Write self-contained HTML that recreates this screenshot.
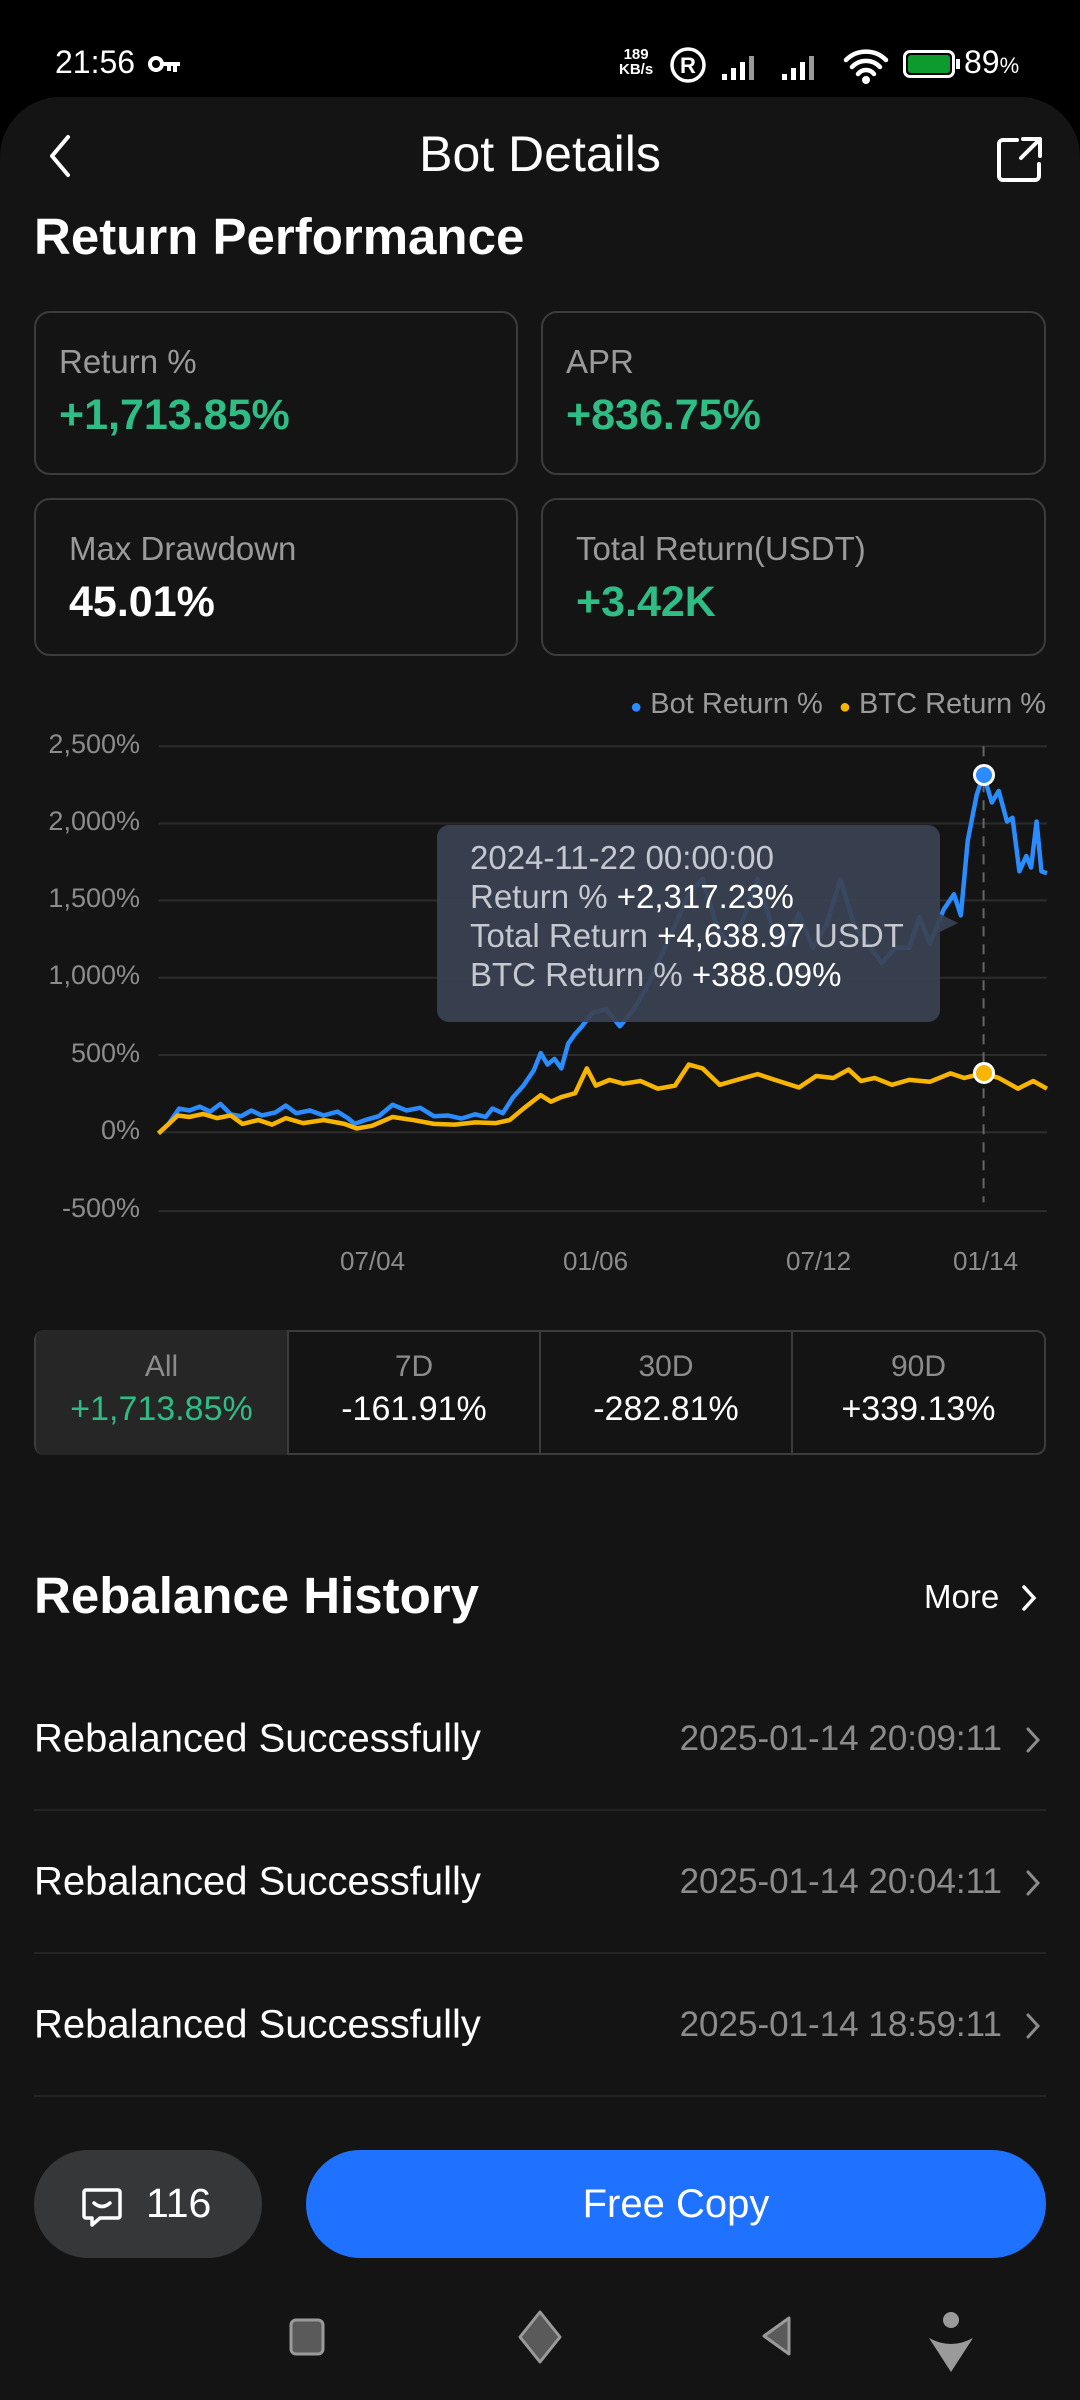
<!DOCTYPE html>
<html><head><meta charset="utf-8"><style>
*{margin:0;padding:0;box-sizing:border-box}
body{width:1080px;height:2400px;background:#000;position:relative;overflow:hidden;font-family:"Liberation Sans",sans-serif;color:#fff}
.a{position:absolute;white-space:nowrap}
.panel{position:absolute;left:0;top:97px;width:1080px;height:2303px;background:#141414;border-radius:60px 60px 0 0}
.card{position:absolute;border:2px solid #3c3c3c;border-radius:16px}
.lbl{font-size:33px;color:#9a9a9a}
.val{font-size:43px;font-weight:bold}
.g{color:#2ebd85}
.yl{position:absolute;right:940px;font-size:27px;color:#8c8c8c;text-align:right}
.xl{position:absolute;font-size:26px;color:#8c8c8c;top:1246px}
.tab{position:absolute;top:1330px;height:125px;text-align:center}
.tab .t{font-size:30px;color:#8c8c8c;margin-top:20px}
.tab .v{font-size:34px;color:#fff;margin-top:6px}
.row{position:absolute;left:34px;width:1012px;height:143px;border-bottom:2px solid #242424}
.row .l{position:absolute;left:0;top:50%;transform:translateY(-50%);font-size:40px}
.row .r{position:absolute;right:44px;top:50%;transform:translateY(-50%);font-size:35px;color:#8c8c8c}
.row svg{position:absolute;right:4px;top:58px}
.dot{position:absolute;width:22px;height:22px;border-radius:50%;border:3px solid #fff}
</style></head><body>
<div class="a" style="left:55px;top:44px;font-size:32px">21:56</div>
<svg class="a" style="left:148px;top:54px" width="34" height="20" viewBox="0 0 34 20"><circle cx="8" cy="10" r="6" fill="none" stroke="#fff" stroke-width="4"/><path d="M14 8h18v4h-3v6h-4v-6h-2v5h-4v-5h-5z" fill="#fff"/></svg>
<div class="a" style="left:619px;top:47px;font-size:15px;font-weight:bold;line-height:15px;text-align:center">189<br>KB/s</div>
<svg class="a" style="left:668px;top:45px" width="40" height="40"><circle cx="20" cy="20" r="16" fill="none" stroke="#fff" stroke-width="3.5"/><text x="20" y="28" font-size="22" font-weight="bold" fill="#fff" text-anchor="middle" font-family="Liberation Sans">R</text></svg>
<svg class="a" style="left:722px;top:48px" width="110" height="34"><g fill="#fff"><rect x="0" y="26" width="5" height="6"/><rect x="9" y="20" width="5" height="12"/><rect x="18" y="14" width="5" height="18"/><rect x="27" y="8" width="5" height="24" opacity=".6"/><rect x="60" y="26" width="5" height="6"/><rect x="69" y="20" width="5" height="12"/><rect x="78" y="14" width="5" height="18"/><rect x="87" y="8" width="5" height="24" opacity=".6"/></g></svg>
<svg class="a" style="left:842px;top:46px" width="48" height="40" viewBox="0 0 48 40"><path d="M4 14a28 28 0 0 1 40 0M10 21a19 19 0 0 1 28 0M16 28a10 10 0 0 1 16 0" fill="none" stroke="#fff" stroke-width="4.5" stroke-linecap="round"/><circle cx="24" cy="34" r="4" fill="#fff"/></svg>
<div class="a" style="left:903px;top:50px;width:52px;height:28px;border:3px solid #fff;border-radius:7px;padding:2px"><div style="width:100%;height:100%;background:#0c9b2c;border-radius:3px"></div></div>
<div class="a" style="left:956px;top:59px;width:4px;height:10px;background:#fff"></div>
<div class="a" style="left:964px;top:44px;font-size:32px">89<span style="font-size:22px">%</span></div>

<div class="panel"></div>
<svg class="a" style="left:46px;top:133px" width="26" height="46"><path d="M22 4L6 23l16 19" fill="none" stroke="#fff" stroke-width="4" stroke-linecap="round" stroke-linejoin="round"/></svg>
<div class="a" style="left:0;width:1080px;text-align:center;top:125px;font-size:50px">Bot Details</div>
<svg class="a" style="left:995px;top:134px" width="50" height="50"><path d="M22 6H8a4 4 0 0 0-4 4v32a4 4 0 0 0 4 4h32a4 4 0 0 0 4-4V30M28 5h17v17M45 5L26 24" fill="none" stroke="#fff" stroke-width="4" stroke-linecap="round" stroke-linejoin="round"/></svg>

<div class="a" style="left:34px;top:207px;font-size:51px;font-weight:bold">Return Performance</div>
<div class="card" style="left:34px;top:311px;width:484px;height:164px"><div class="a lbl" style="left:23px;top:30px">Return %</div><div class="a val g" style="left:23px;top:78px">+1,713.85%</div></div>
<div class="card" style="left:541px;top:311px;width:505px;height:164px"><div class="a lbl" style="left:23px;top:30px">APR</div><div class="a val g" style="left:23px;top:78px">+836.75%</div></div>
<div class="card" style="left:34px;top:498px;width:484px;height:158px"><div class="a lbl" style="left:33px;top:30px">Max Drawdown</div><div class="a val" style="left:33px;top:78px">45.01%</div></div>
<div class="card" style="left:541px;top:498px;width:505px;height:158px"><div class="a lbl" style="left:33px;top:30px">Total Return(USDT)</div><div class="a val g" style="left:33px;top:78px">+3.42K</div></div>

<div class="a" style="right:34px;top:688px;font-size:29px;color:#9a9a9a"><span style="color:#2a8cff;font-size:20px">●</span> Bot Return % &nbsp;<span style="color:#f7b500;font-size:20px">●</span> BTC Return %</div>
<div class="yl" style="top:729px">2,500%</div>
<div class="yl" style="top:806px">2,000%</div>
<div class="yl" style="top:883px">1,500%</div>
<div class="yl" style="top:960px">1,000%</div>
<div class="yl" style="top:1038px">500%</div>
<div class="yl" style="top:1115px">0%</div>
<div class="yl" style="top:1193px">-500%</div>
<div class="xl" style="left:340px">07/04</div>
<div class="xl" style="left:563px">01/06</div>
<div class="xl" style="left:786px">07/12</div>
<div class="xl" style="left:953px">01/14</div>

<svg class="a" style="left:0;top:680px" width="1080" height="600" viewBox="0 0 1568 1568" preserveAspectRatio="none">
<g stroke="#2c2c2c" stroke-width="2"><line x1="230" y1="173" x2="1520" y2="173" vector-effect="non-scaling-stroke"/><line x1="230" y1="375" x2="1520" y2="375" vector-effect="non-scaling-stroke"/><line x1="230" y1="576" x2="1520" y2="576" vector-effect="non-scaling-stroke"/><line x1="230" y1="778" x2="1520" y2="778" vector-effect="non-scaling-stroke"/><line x1="230" y1="980" x2="1520" y2="980" vector-effect="non-scaling-stroke"/><line x1="230" y1="1182" x2="1520" y2="1182" vector-effect="non-scaling-stroke"/><line x1="230" y1="1388" x2="1520" y2="1388" vector-effect="non-scaling-stroke"/></g>
<line x1="1428" y1="173" x2="1428" y2="1365" stroke="#666" stroke-width="2" stroke-dasharray="10 8" vector-effect="non-scaling-stroke"/>
<polyline vector-effect="non-scaling-stroke" fill="none" stroke="#2a8cff" stroke-width="4.5" stroke-linejoin="round" points="230,1185 245,1160 260,1120 275,1125 290,1115 305,1128 320,1108 335,1135 350,1140 365,1125 380,1138 400,1130 415,1112 430,1132 450,1125 470,1138 490,1128 505,1145 515,1160 530,1150 550,1140 570,1110 590,1125 610,1118 630,1140 650,1138 670,1146 690,1135 705,1142 715,1120 730,1132 745,1090 760,1060 775,1020 785,975 795,1005 805,990 815,1015 825,950 835,925 845,905 860,870 880,860 900,905 920,860 940,800 960,720 980,640 1000,560 1020,520 1040,640 1060,700 1080,620 1100,520 1120,640 1140,690 1160,610 1180,700 1200,640 1220,520 1240,640 1260,690 1280,740 1300,700 1320,700 1335,620 1350,690 1370,600 1385,560 1395,615 1405,420 1418,300 1428,248 1440,320 1450,290 1462,370 1470,360 1480,500 1490,460 1497,490 1505,370 1512,500 1520,505"/>
<polyline vector-effect="non-scaling-stroke" fill="none" stroke="#f7b500" stroke-width="4.5" stroke-linejoin="round" points="230,1185 245,1160 258,1138 275,1142 295,1134 315,1145 335,1138 352,1160 375,1150 395,1162 415,1145 440,1158 470,1150 500,1160 518,1172 540,1165 570,1142 600,1150 630,1160 660,1162 690,1156 720,1158 740,1150 760,1120 785,1085 800,1102 815,1090 835,1080 852,1015 865,1060 885,1045 905,1055 930,1048 955,1068 980,1060 1000,1005 1020,1015 1045,1058 1070,1045 1100,1030 1125,1045 1160,1065 1185,1035 1210,1040 1232,1018 1250,1048 1270,1040 1295,1058 1320,1045 1350,1050 1380,1028 1400,1040 1428,1028 1450,1040 1478,1068 1500,1048 1520,1068"/>
<path d="M1363 610l28 25-28 25z" fill="#3b4252" fill-opacity=".92"/>
</svg>
<div class="a" style="left:437px;top:825px;width:503px;height:197px;border-radius:12px;background:rgba(59,66,82,.92)"></div>
<div class="dot" style="left:973px;top:764px;background:#2a8cff"></div>
<div class="dot" style="left:973px;top:1062px;background:#f7b500"></div>
<div class="a" style="left:470px;top:838px;font-size:33px;line-height:39px;color:#c5c8cf">2024-11-22 00:00:00<br>Return % <span style="color:#fff">+2,317.23%</span><br>Total Return <span style="color:#fff">+4,638.97</span> USDT<br>BTC Return % <span style="color:#fff">+388.09%</span></div>

<div class="a" style="left:34px;top:1330px;width:1012px;height:125px;border:2px solid #3c3c3c;border-radius:10px"></div>
<div class="tab" style="left:36px;width:251px;background:#262626;border-radius:8px 0 0 8px"><div class="t">All</div><div class="v g" style="color:#2ebd85">+1,713.85%</div></div>
<div class="a" style="left:287px;top:1332px;width:2px;height:121px;background:#3c3c3c"></div>
<div class="tab" style="left:289px;width:250px"><div class="t">7D</div><div class="v">-161.91%</div></div>
<div class="a" style="left:539px;top:1332px;width:2px;height:121px;background:#3c3c3c"></div>
<div class="tab" style="left:541px;width:250px"><div class="t">30D</div><div class="v">-282.81%</div></div>
<div class="a" style="left:791px;top:1332px;width:2px;height:121px;background:#3c3c3c"></div>
<div class="tab" style="left:793px;width:251px"><div class="t">90D</div><div class="v">+339.13%</div></div>

<div class="a" style="left:34px;top:1566px;font-size:51px;font-weight:bold">Rebalance History</div>
<div class="a" style="left:924px;top:1578px;font-size:33px">More</div>
<svg class="a" style="left:1020px;top:1584px" width="18" height="28"><path d="M4 3l10 11-10 11" fill="none" stroke="#fff" stroke-width="3.5" stroke-linecap="round"/></svg>

<div class="row" style="top:1668px"><div class="l">Rebalanced Successfully</div><div class="r">2025-01-14 20:09:11</div><svg width="18" height="28"><path d="M4 3l10 11-10 11" fill="none" stroke="#8c8c8c" stroke-width="3" stroke-linecap="round"/></svg></div>
<div class="row" style="top:1811px"><div class="l">Rebalanced Successfully</div><div class="r">2025-01-14 20:04:11</div><svg width="18" height="28"><path d="M4 3l10 11-10 11" fill="none" stroke="#8c8c8c" stroke-width="3" stroke-linecap="round"/></svg></div>
<div class="row" style="top:1954px"><div class="l">Rebalanced Successfully</div><div class="r">2025-01-14 18:59:11</div><svg width="18" height="28"><path d="M4 3l10 11-10 11" fill="none" stroke="#8c8c8c" stroke-width="3" stroke-linecap="round"/></svg></div>

<div class="a" style="left:34px;top:2150px;width:228px;height:108px;border-radius:54px;background:#363738"></div>
<svg class="a" style="left:80px;top:2186px" width="44" height="44" viewBox="0 0 44 44"><path d="M6 4h32a2 2 0 0 1 2 2v24a2 2 0 0 1-2 2H20l-8 7v-7H6a2 2 0 0 1-2-2V6a2 2 0 0 1 2-2zM14 17q8 7 16 0" fill="none" stroke="#fff" stroke-width="3.5" stroke-linejoin="round" stroke-linecap="round"/></svg>
<div class="a" style="left:146px;top:2180px;font-size:41px">116</div>
<div class="a" style="left:306px;top:2150px;width:740px;height:108px;border-radius:54px;background:#1f72ff;text-align:center;line-height:108px;font-size:40px">Free Copy</div>

<svg class="a" style="left:0;top:2300px" width="1080" height="80">
<rect x="291" y="20" width="32" height="34" rx="5" fill="#5a5a5a" stroke="#9a9a9a" stroke-width="3"/>
<path d="M540 12l20 25-20 25-20-25z" fill="#5a5a5a" stroke="#9a9a9a" stroke-width="3" stroke-linejoin="round"/>
<path d="M789 18v36l-25-18z" fill="#5a5a5a" stroke="#9a9a9a" stroke-width="3" stroke-linejoin="round"/>
<circle cx="951" cy="20" r="8" fill="#9a9a9a"/><path d="M929 38q22 12 44 0l-22 34z" fill="#9a9a9a"/>
</svg>
</body></html>
